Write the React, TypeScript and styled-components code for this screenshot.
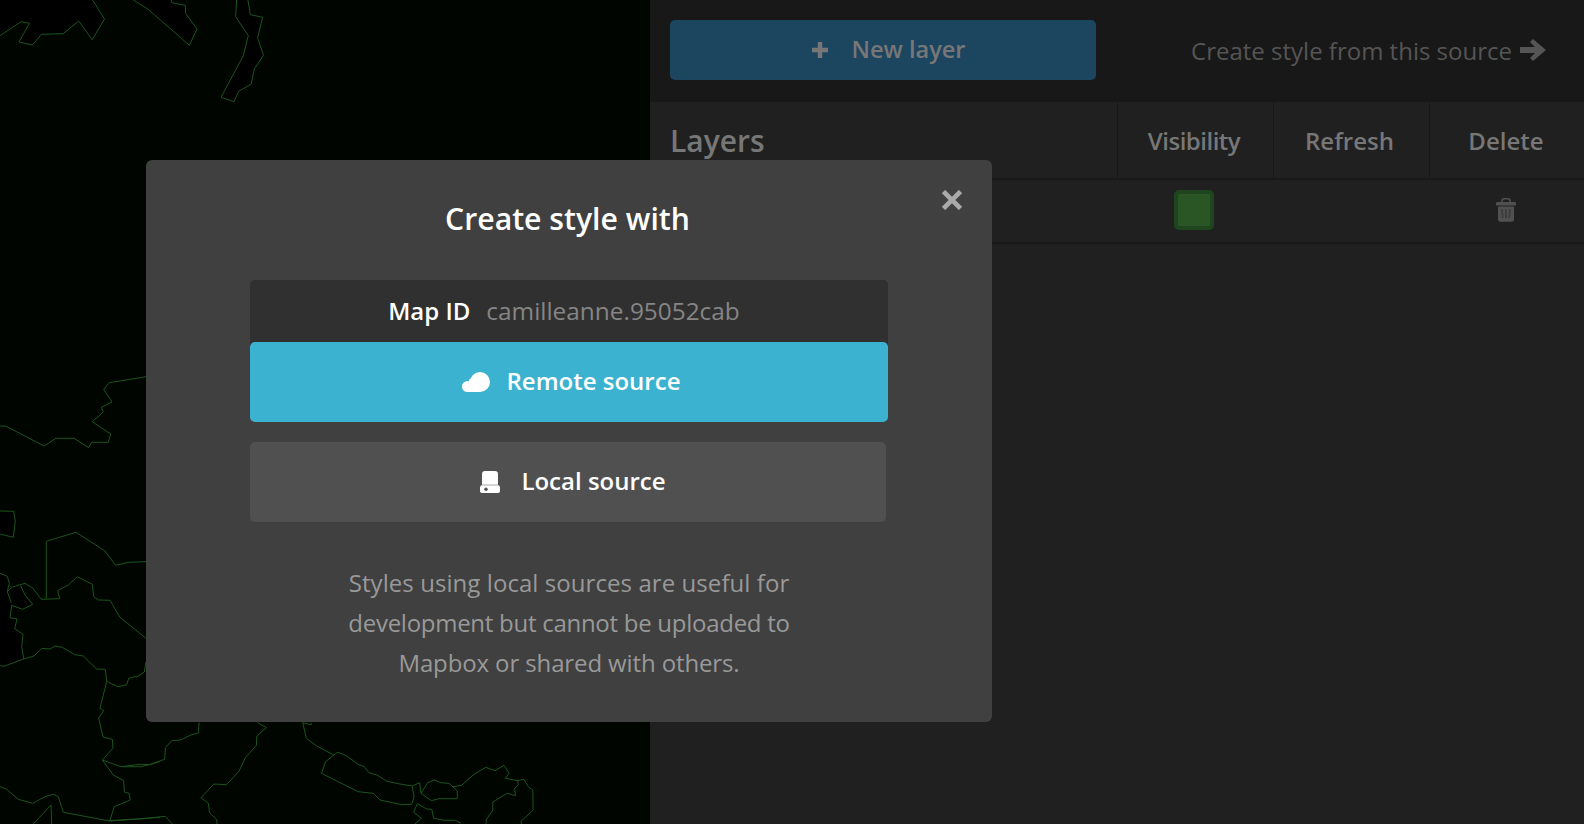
import React from "react";
import styled, { createGlobalStyle } from "styled-components";

const Global = createGlobalStyle`
  html, body { margin: 0; padding: 0; background: #181818; overflow: hidden; }
  * { box-sizing: border-box; }
  body { font-family: "Open Sans", "Liberation Sans", sans-serif; }
`;

const Page = styled.div`
  position: relative;
  display: flex;
  width: 1584px;
  height: 824px;
  overflow: hidden;
`;
const MapPane = styled.div`
  flex: 0 0 650px;
  height: 824px;
  background: #000500;
`;
const MapSvg = styled.svg`
  display: block;
  width: 650px;
  height: 824px;
`;
const SidePanel = styled.div`
  flex: 1;
  display: flex;
  flex-direction: column;
  background: #202020;
`;
const TopBar = styled.div`
  flex: 0 0 102px;
  display: flex;
  align-items: center;
  justify-content: space-between;
  padding: 0 38px 2px 20px;
  background: #181818;
`;
const NewLayerButton = styled.div`
  width: 426px;
  height: 60px;
  display: flex;
  align-items: center;
  justify-content: center;
  gap: 23px;
  padding-left: 12px;
  background: #1c4560;
  border-radius: 5px;
  color: #777;
  font-size: 23.6px;
  font-weight: 600;
`;
const NewLayerLabel = styled.span`
  margin-bottom: 2px;
`;
const StyleLink = styled.div`
  display: flex;
  align-items: center;
  gap: 8px;
  color: #555;
  font-size: 24px;
`;
const TableHead = styled.div`
  flex: 0 0 78px;
  display: grid;
  grid-template-columns: 1fr 156px 156px 155px;
  border-bottom: 2px solid #181818;
`;
const TableTitle = styled.div`
  display: flex;
  align-items: center;
  padding-left: 20px;
  color: #777;
  font-size: 30px;
  font-weight: 600;
`;
const HeadCell = styled.div<{ $spacing?: number; $inset?: number }>`
  display: flex;
  align-items: center;
  justify-content: center;
  padding-right: ${(p) => p.$inset ?? 4}px;
  border-left: 1px solid #181818;
  color: #777;
  font-size: 24px;
  font-weight: 600;
  letter-spacing: ${(p) => p.$spacing ?? 0}px;
`;
const LayerRow = styled.div`
  flex: 0 0 64px;
  display: grid;
  grid-template-columns: 1fr 156px 156px 155px;
  align-items: center;
  justify-items: center;
  border-bottom: 2px solid #181818;
  padding-bottom: 3px;
`;
const Swatch = styled.div`
  grid-column: 2;
  width: 40px;
  height: 40px;
  margin-right: 2px;
  background: #2a5626;
  border: 4px solid #1f451f;
  border-radius: 5px;
`;
const TrashSlot = styled.div`
  grid-column: 4;
  display: flex;
  margin-right: 2px;
`;

const Modal = styled.div`
  position: absolute;
  left: 146px;
  top: 160px;
  width: 846px;
  height: 562px;
  display: flex;
  flex-direction: column;
  align-items: center;
  padding: 35px 104px 0;
  background: #404040;
  border-radius: 6px;
`;
const CloseSlot = styled.div`
  position: absolute;
  top: 30px;
  right: 29px;
  display: flex;
`;
const ModalTitle = styled.h2`
  margin: 0 0 38px -3px;
  height: 47px;
  line-height: 47px;
  color: #fff;
  font-size: 30.2px;
  font-weight: 600;
`;
const MapIdField = styled.div`
  width: 100%;
  height: 66px;
  display: flex;
  align-items: center;
  justify-content: center;
  gap: 16px;
  padding: 0 10px 6px 0;
  margin-bottom: -4px;
  background: #303030;
  border-radius: 5px 5px 0 0;
  font-size: 24px;
`;
const MapIdLabel = styled.span`
  color: #fff;
  font-weight: 600;
`;
const MapIdValue = styled.span`
  color: #858585;
  font-size: 24.4px;
`;
const SourceButton = styled.div<{ $primary?: boolean; $gap: number; $shift: number }>`
  width: ${(p) => (p.$primary ? "100%" : "636px")};
  align-self: flex-start;
  height: 80px;
  display: flex;
  align-items: center;
  justify-content: center;
  gap: ${(p) => p.$gap}px;
  padding-left: ${(p) => p.$shift}px;
  margin-bottom: 20px;
  background: ${(p) => (p.$primary ? "#3bb2d0" : "#505050")};
  border-radius: 5px;
  color: #fff;
  font-size: 24px;
  font-weight: 600;
`;
const SourceLabel = styled.span`
  margin-bottom: 4px;
`;
const Note = styled.p`
  margin: 21px 0 0;
  text-align: center;
  color: #999;
  font-size: 24px;
  line-height: 40px;
`;
const NoteLine = styled.span<{ $spacing: number }>`
  display: block;
  letter-spacing: ${(p) => p.$spacing}px;
`;

const WATER = "#000500";
const STROKE = "#1c541c";

type P = number[];
const conv = (pts: P, ox: number, oy: number, sx: number, sy: number) => {
  const out: string[] = [];
  for (let i = 0; i < pts.length; i += 2) {
    out.push(`${(ox + pts[i] / sx).toFixed(1)},${(oy + pts[i + 1] / sy).toFixed(1)}`);
  }
  return out.join(" ");
};

const TOP: P[] = [
  [0,107,50,65,70,70,45,126,77,135,98,103,150,101,187,63,219,119,248,57,220,0],
  [317,0,352,28,450,136,468,87,441,40,440,16,408,8,407,0],
  [562,0,560,50,590,107,578,167,525,292,556,305,567,274,597,252,604,207,626,166,612,113,624,52,595,44,589,0],
];
const TOP_BLACK: P[] = [
  [0,0,220,0,248,57,219,119,187,63,150,101,98,103,77,135,45,126,70,70,50,65,0,107],
  [317,0,352,28,450,136,468,87,441,40,440,16,408,8,407,0],
  [562,0,560,50,590,107,578,167,525,292,556,305,567,274,597,252,604,207,626,166,612,113,624,52,595,44,589,0],
];
const LEFT: P[] = [
  [438,50,328,68,311,88,336,126,304,142,310,156,277,185,332,222,325,247,275,247,266,263,222,235,168,235,132,258,17,198,0,198],
  [0,453,41,454,46,484,40,532,0,522],
  [139,716,139,544,228,517,315,573,347,616,386,607,438,605],
  [0,640,22,649,28,670,22,695,34,728],
  [22,695,35,682,75,670,98,684,124,718,179,716,173,692,205,675,232,650,277,673,281,710,295,720,330,721,360,772,438,835],
  [35,736,30,773,51,777,44,806,69,823,65,860,71,897,102,888,125,865,150,867,165,858,187,862,224,884,250,888,290,927,316,928,320,964,353,980,380,974,386,955,415,948,433,936,438,905],
  [35,736,68,748,98,733,75,705,62,677],
  [0,917,12,919,71,897],
  [320,964,300,1045,311,1052,296,1074,309,1131,337,1138,339,1165,307,1200,340,1245,371,1262,373,1296,387,1300,391,1320,343,1340,329,1383],
  [307,1200,363,1220,420,1213,452,1214,480,1204],
  [0,1280,20,1288,55,1318,98,1330,135,1310,160,1303,175,1310,190,1357,329,1383,480,1372],
  [100,1392,153,1335,155,1392],
];
const LEFT_BLACK: P[] = [
  [0,453,41,454,46,484,40,532,0,522],
  [0,640,22,649,28,670,22,695,34,728,35,736,30,773,51,777,44,806,69,823,65,860,71,897,12,919,0,917],
  [35,682,62,677,75,705,98,733,68,748,35,736],
];
const BOTTOM: P[] = [
  [112,170,165,170,190,163,229,148,231,113,248,92,272,90,300,75,320,68,322,38],
  [250,342,230,319,170,326,80,332],
  [480,38,504,53,478,78,477,106,447,143,430,183,396,224,362,222,327,263,347,280,350,308,370,330,370,342],
  [602,38,612,85,640,108,686,135,664,155,653,190,680,205,752,245,793,250,811,270,870,284,897,283,903,260,898,228,918,218,922,250,950,272,970,266,1020,266,1020,243,998,220,975,218,958,210,940,218,922,250],
  [686,135,697,127,720,137,752,163,768,170,781,188,803,195,830,214,865,222,898,228],
  [1008,230,1032,226,1063,195,1097,172,1122,182,1146,166,1160,190,1150,205,1183,212,1200,208,1212,230,1224,240,1225,300,1193,333,1193,342],
  [1183,212,1185,225,1175,235,1177,257,1155,250,1116,276,1116,300,1098,330,1098,342],
  [905,342,923,325,902,307,912,281,937,297,951,298,956,325,985,331,1015,331,1030,340],
  [602,38,625,44,625,38],
];

const Lines = ({ sets, ox, oy, sx, sy }: { sets: P[]; ox: number; oy: number; sx: number; sy: number }) => (
  <>
    {sets.map((s, i) => (
      <polyline key={i} points={conv(s, ox, oy, sx, sy)} fill="none" stroke={STROKE} strokeWidth={1} />
    ))}
  </>
);
const Fills = ({ sets, ox, oy, sx, sy }: { sets: P[]; ox: number; oy: number; sx: number; sy: number }) => (
  <>
    {sets.map((s, i) => (
      <polygon key={i} points={conv(s, ox, oy, sx, sy)} fill="#000" />
    ))}
  </>
);

const TopSx = 1568 / 660;
const BotSx = 1568 / 580;

const MapDrawing = () => (
  <MapSvg viewBox="0 0 650 824">
    <rect width="650" height="824" fill={WATER} />
    <Fills sets={TOP_BLACK} ox={0} oy={0} sx={TopSx} sy={3} />
    <Fills sets={LEFT_BLACK} ox={0} oy={360} sx={3} sy={3} />
    <Lines sets={TOP} ox={0} oy={0} sx={TopSx} sy={3} />
    <Lines sets={LEFT} ox={0} oy={360} sx={3} sy={3} />
    <Lines sets={BOTTOM} ox={80} oy={710} sx={BotSx} sy={3} />
  </MapSvg>
);

const PlusIcon = () => (
  <svg width="16" height="16" viewBox="0 0 16 16">
    <path d="M8 0v16M0 8h16" stroke="#777" strokeWidth="4.4" fill="none" />
  </svg>
);
const ArrowIcon = () => (
  <svg width="26" height="22" viewBox="0 0 26 22">
    <path d="M0 8h15L10 3 13 0 26 11 13 22 10 19 15 14H0z" fill="#555" />
  </svg>
);
const TrashIcon = () => (
  <svg width="20" height="24" viewBox="0 0 20 24">
    <path d="M6 4V2.500C6 1.200 7 .8 8 .8h4c1 0 2 .4 2 1.700V4" fill="none" stroke="#505050" strokeWidth="1.600" />
    <rect x="0" y="4" width="20" height="3.400" rx="1.200" fill="#505050" />
    <path d="M2 8.600h16V21.500a2.300 2.300 0 0 1-2.300 2.300H4.300A2.300 2.300 0 0 1 2 21.500z" fill="#505050" />
    <path d="M6 11l.8 9M10 11v9M14 11l-.8 9" stroke="#3a3a3a" strokeWidth="1.600" fill="none" />
  </svg>
);
const CrossIcon = () => (
  <svg width="22" height="20" viewBox="0 0 22 20">
    <path d="M2.500 1.500L19.500 18.500M19.500 1.500L2.500 18.500" stroke="#aaa" strokeWidth="4.600" fill="none" />
  </svg>
);
const CloudIcon = () => (
  <svg width="28" height="20" viewBox="0 0 28 20">
    <circle cx="18" cy="10" r="10" fill="#fff" />
    <circle cx="5.500" cy="14.500" r="5.500" fill="#fff" />
    <circle cx="11" cy="10.500" r="4.500" fill="#fff" />
    <rect x="5.500" y="12" width="13" height="8" fill="#fff" />
  </svg>
);
const DriveIcon = () => (
  <svg width="20" height="22" viewBox="0 0 20 22">
    <path d="M2 13.700V3a3 3 0 0 1 3-3h10a3 3 0 0 1 3 3v10.700z" fill="#fff" />
    <path d="M1 14.300h18l1 2V20a2 2 0 0 1-2 2H2a2 2 0 0 1-2-2v-3.700z" fill="#fff" />
    <circle cx="6" cy="18.200" r="1.700" fill="#505050" />
  </svg>
);

export default function App() {
  return (
    <Page>
      <Global />
      <MapPane>
        <MapDrawing />
      </MapPane>
      <SidePanel>
        <TopBar>
          <NewLayerButton>
            <PlusIcon />
            <NewLayerLabel>New layer</NewLayerLabel>
          </NewLayerButton>
          <StyleLink>
            <span>Create style from this source</span>
            <ArrowIcon />
          </StyleLink>
        </TopBar>
        <TableHead>
          <TableTitle>Layers</TableTitle>
          <HeadCell $spacing={-0.5} $inset={3}>Visibility</HeadCell>
          <HeadCell>Refresh</HeadCell>
          <HeadCell $inset={2}>Delete</HeadCell>
        </TableHead>
        <LayerRow>
          <Swatch />
          <TrashSlot>
            <TrashIcon />
          </TrashSlot>
        </LayerRow>
      </SidePanel>
      <Modal>
        <CloseSlot>
          <CrossIcon />
        </CloseSlot>
        <ModalTitle>Create style with</ModalTitle>
        <MapIdField>
          <MapIdLabel>Map ID</MapIdLabel>
          <MapIdValue>camilleanne.95052cab</MapIdValue>
        </MapIdField>
        <SourceButton $primary $gap={17} $shift={4}>
          <CloudIcon />
          <SourceLabel>Remote source</SourceLabel>
        </SourceButton>
        <SourceButton $gap={21} $shift={10}>
          <DriveIcon />
          <SourceLabel>Local source</SourceLabel>
        </SourceButton>
        <Note>
          <NoteLine $spacing={0.07}>Styles using local sources are useful for</NoteLine>
          <NoteLine $spacing={-0.27}>development but cannot be uploaded to</NoteLine>
          <NoteLine $spacing={-0.12}>Mapbox or shared with others.</NoteLine>
        </Note>
      </Modal>
    </Page>
  );
}
